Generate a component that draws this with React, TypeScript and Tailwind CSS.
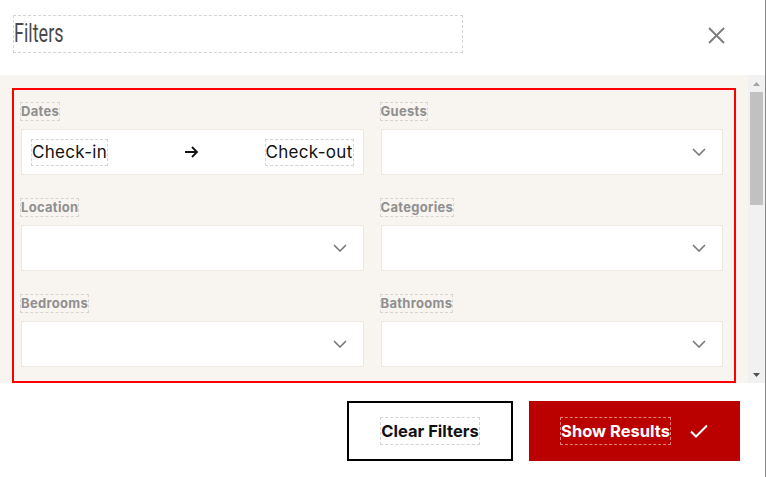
import React from "react";

const dotted = "outline outline-1 outline-dashed outline-[#d4d4d4]";

function Chevron() {
  return (
    <svg width="14" height="8" viewBox="0 0 14 8" fill="none" className="shrink-0">
      <path d="M1 1l6 6 6-6" stroke="#777" strokeWidth="1.6" />
    </svg>
  );
}

function Field({ label, children }: { label: string; children?: React.ReactNode }) {
  return (
    <div className="flex flex-col items-start">
      <span className={`${dotted} text-[13px] leading-[17px] font-bold tracking-[0.3px] text-[#8f8f8f]`}>{label}</span>
      <div className="mt-[9px] w-full h-[46px] bg-white border border-[#efe8e0] flex items-center">
        {children ?? (
          <div className="flex-1 flex justify-end pr-[16px]">
            <Chevron />
          </div>
        )}
      </div>
    </div>
  );
}

export default function App() {
  return (
    <div
      className="w-[766px] h-[477px] bg-white border-r border-[#8a8a8a] flex flex-col"
      style={{ fontFamily: "Inter, 'Open Sans', sans-serif" }}
    >
      <div className="h-[75px] flex items-start pt-[16px] pl-[14px] pr-[40px]">
        <div className={`${dotted} w-[448px] h-[36px] flex items-center`}>
          <span
            className="text-[25px] leading-[36px] text-[#4a4a4a] inline-block origin-left scale-x-[0.72]"
            style={{ fontFamily: "Roboto, sans-serif" }}
          >
            Filters
          </span>
        </div>
        <div className="ml-auto mt-[11px]">
          <svg width="17" height="17" viewBox="0 0 17 17">
            <path d="M1 1l15 15M16 1L1 16" stroke="#7a7a7a" strokeWidth="1.8" />
          </svg>
        </div>
      </div>

      <div className="h-[308px] bg-[#f8f5f1] flex">
        <div className="flex-1 pl-[12px] pr-[12px] pt-[13px]">
          <div className="h-[295px] border-2 border-[#ff0000] pl-[7px] pr-[11px] pt-[13px]">
            <div className="grid grid-cols-2 gap-x-[17px] gap-y-[24px]">
              <Field label="Dates">
                <div className="flex-1 grid grid-cols-[1fr_auto_1fr] items-center pl-[10px] pr-[10px] text-[17px] tracking-[0.3px] text-[#111]">
                  <span className={`${dotted} leading-[25px] justify-self-start`}>Check-in</span>
                  <svg width="14" height="12" viewBox="0 0 14 12" fill="none">
                    <path d="M0 6h12M7 1l5 5-5 5" stroke="#111" strokeWidth="1.8" />
                  </svg>
                  <span className={`${dotted} leading-[25px] justify-self-end`}>Check-out</span>
                </div>
              </Field>
              <Field label="Guests" />
              <Field label="Location" />
              <Field label="Categories" />
              <Field label="Bedrooms" />
              <Field label="Bathrooms" />
            </div>
          </div>
        </div>
        <div className="w-[17px] bg-[#f1f1f1] flex flex-col items-center">
          <div className="h-[17px] flex items-center justify-center">
            <svg width="7" height="4" viewBox="0 0 7 4"><path d="M0 4h7L3.5 0z" fill="#a3a3a3" /></svg>
          </div>
          <div className="w-[13px] h-[113px] bg-[#c1c1c1]" />
          <div className="flex-1" />
          <div className="h-[17px] flex items-center justify-center">
            <svg width="7" height="4" viewBox="0 0 7 4"><path d="M0 0h7L3.5 4z" fill="#505050" /></svg>
          </div>
        </div>
      </div>

      <div className="flex justify-end gap-[16px] pt-[18px] pr-[25px]">
        <button className="w-[166px] h-[60px] border-2 border-black bg-white flex items-center justify-center">
          <span className={`${dotted} text-[16.5px] font-bold text-[#111] leading-[26px]`}>Clear Filters</span>
        </button>
        <button className="w-[211px] h-[60px] bg-[#bb0000] flex items-center justify-center gap-[20px]">
          <span className="outline outline-1 outline-dashed outline-[#e08080] text-[16.5px] font-bold text-white leading-[26px]">
            Show Results
          </span>
          <svg width="18" height="14" viewBox="0 0 18 14" fill="none">
            <path d="M1 7.5l5 5L17 1.5" stroke="white" strokeWidth="2" />
          </svg>
        </button>
      </div>
    </div>
  );
}
